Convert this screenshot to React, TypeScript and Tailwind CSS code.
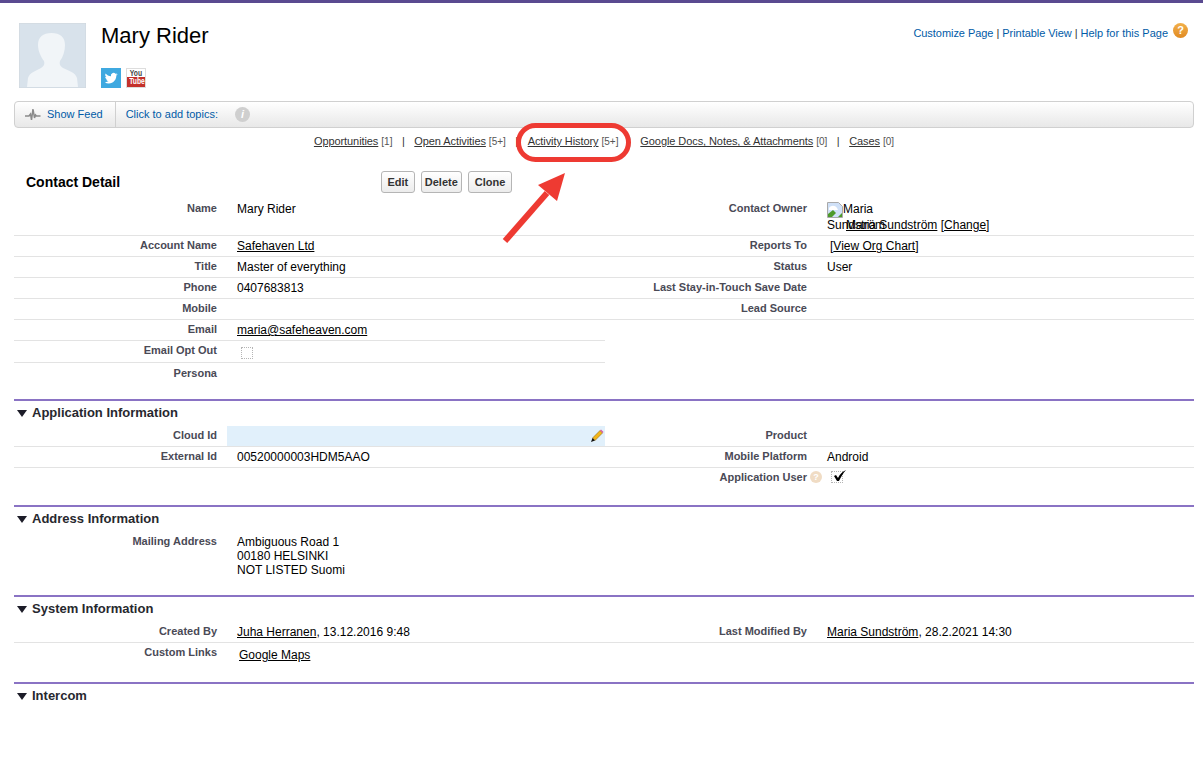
import type { ReactNode } from "react"

const Label = ({ children, className = "w-[213px] pt-[2px]" }: { children?: ReactNode; className?: string }) => (
  <div className={`shrink-0 pr-[10px] text-right text-[11px] leading-[14px] font-bold text-[#4a4a56] ${className}`}>
    {children}
  </div>
)

const Value = ({ children, className = "" }: { children?: ReactNode; className?: string }) => (
  <div className={`pl-[10px] pt-[3px] text-[12px] leading-[14px] text-black ${className}`}>{children}</div>
)

// full width detail row, h includes the bottom border
const Row = ({ cells, h = "h-[21px]", line = true }: { cells: ReactNode; h?: string; line?: boolean }) => (
  <div className={`flex ${h} ${line ? "border-b border-[#e3e3e3]" : ""}`}>{cells}</div>
)

const Pair = ({ a, b, c, d }: { a?: ReactNode; b?: ReactNode; c?: ReactNode; d?: ReactNode }) => (
  <>
    <Label>{a}</Label>
    <Value className="w-[377px] shrink-0">{b}</Value>
    <Label>{c}</Label>
    <Value className="flex-1">{d}</Value>
  </>
)

const Section = ({ title, children }: { title: string; children?: ReactNode }) => (
  <section className="border-t-2 border-[#8a73c4]">
    <div className="flex h-[25px] items-center gap-[5px] pb-[2px] pl-[3px] text-[13px] font-bold text-[#27282e]">
      <svg width="10" height="8" viewBox="0 0 10 8">
        <path d="M0 1h10L5 8z" fill="#1c1c28" />
      </svg>
      {title}
    </div>
    {children}
  </section>
)

const Tab = ({ name, count, sep = true }: { name: string; count: string; sep?: boolean }) => (
  <>
    <span className="text-[11px] tracking-[-0.08px] text-[#333] underline">{name}</span>
    <span className="ml-[3px] text-[10px] text-[#555]">[{count}]</span>
    {sep && <span className="mx-[9.5px] text-[11px] text-[#333]">|</span>}
  </>
)

const Btn = ({ children, className = "px-[6px]" }: { children: ReactNode; className?: string }) => (
  <button className={`h-[22px] rounded-[3px] border border-[#b5b5b5] bg-gradient-to-b from-white to-[#ececec] text-[11px] font-bold text-[#333] ${className}`}>
    {children}
  </button>
)

const Mail = ({ children }: { children: ReactNode }) => <span className="text-black underline">{children}</span>

export default function App() {
  return (
    <div className="relative min-h-[776px] overflow-hidden bg-white font-['Liberation_Sans',Arial,sans-serif]">
      <div className="h-[3px] bg-[#5a4a90]" />

      {/* Page header */}
      <header className="flex h-[98px] pl-[19px] pr-[15px] pt-[20px]">
        <svg width="67" height="65" viewBox="0 0 67 65" className="shrink-0">
          <rect width="67" height="65" fill="#d8e2eb" stroke="#cfd6dc" />
          <path
            d="M32.500 10C41 10 46 14 46 22C46 28 44 34 41 38C40 41 41 43 44 45C50 48 56 49 58 55L59 64H8L9 55C11 49 17 48 22 45C25 43 26 41 25 38C22 34 19 28 19 22C19 14 24 10 32.500 10Z"
            fill="#f1f5f8"
          />
        </svg>
        <div className="ml-[15px]">
          <h1 className="text-[22px] leading-[26px] font-normal text-black">Mary Rider</h1>
          <div className="mt-[19px] flex gap-[5px]">
            <svg width="20" height="20" viewBox="0 0 20 20">
              <rect width="20" height="20" fill="#3fa9e0" />
              <path
                d="M16.500 6.200c-.5.2-1 .4-1.500.4.5-.3 1-.8 1.200-1.400-.5.3-1.100.5-1.700.6a2.600 2.600 0 0 0-4.500 2.400c-2.200-.1-4.100-1.100-5.400-2.700-.7 1.200-.4 2.700.8 3.500-.4 0-.8-.1-1.200-.3 0 1.300.9 2.400 2.100 2.600-.4.1-.8.1-1.200 0 .3 1 1.300 1.800 2.500 1.800-1.100.9-2.500 1.300-3.900 1.100 1.200.8 2.600 1.200 4.100 1.200 4.900 0 7.700-4.100 7.500-7.900.5-.3 1-.8 1.400-1.300z"
                fill="#fff"
              />
            </svg>
            <div className="flex h-[20px] w-[20px] flex-col overflow-hidden border border-[#ddd] text-center text-[9px] leading-[9px] font-bold">
              <span className="h-[8px] scale-x-75 text-[#444]">You</span>
              <span className="flex-1 bg-[#c4302b] text-white">
                <span className="block scale-x-75">Tube</span>
              </span>
            </div>
          </div>
        </div>
        <div className="ml-auto flex h-[20px] items-center text-[11px] text-[#333]">
          <span className="tracking-[-0.05px] text-[#015ba7]">Customize Page</span>
          <span className="mx-[3px]">|</span>
          <span className="tracking-[-0.05px] text-[#015ba7]">Printable View</span>
          <span className="mx-[3px]">|</span>
          <span className="text-[#015ba7]">Help for this Page</span>
          <span className="mb-[5px] ml-[5px] flex h-[15px] w-[15px] items-center justify-center rounded-full bg-gradient-to-b from-[#f2b04a] to-[#e08a20] text-[11px] font-bold text-white">
            ?
          </span>
        </div>
      </header>

      <main className="ml-[14px] mr-[9px]">
        {/* Feed bar */}
        <div className="flex h-[27px] items-center rounded-[4px] border border-[#d0d0d0] bg-gradient-to-b from-white to-[#e8e8e8] text-[11px] text-[#015ba7]">
          <div className="flex h-full items-center border-r border-[#d0d0d0] pl-[10px] pr-[12px]">
            <svg width="16" height="14" viewBox="0 0 16 14" className="mr-[6px]">
              <path d="M0 8h4l1.500-2 1 6 1.500-11 1.500 9 1-3 1 1h4" fill="none" stroke="#8a8a8a" strokeWidth="1.500" />
            </svg>
            Show Feed
          </div>
          <span className="ml-[10px]">Click to add topics:</span>
          <span className="ml-[17px] flex h-[15px] w-[15px] items-center justify-center rounded-full bg-[#cfcfcf] text-[11px] font-bold text-white italic">
            i
          </span>
        </div>

        {/* Related list links */}
        <nav className="flex h-[27px] items-center justify-center">
          <Tab name="Opportunities" count="1" />
          <Tab name="Open Activities" count="5+" />
          <Tab name="Activity History" count="5+" />
          <Tab name="Google Docs, Notes, & Attachments" count="0" />
          <Tab name="Cases" count="0" sep={false} />
        </nav>

        {/* Detail title and buttons */}
        <div className="flex h-[44px] items-center pt-[10px]">
          <h2 className="ml-[12px] w-[355px] text-[14px] font-bold text-black">Contact Detail</h2>
          <div className="flex gap-[6px]">
            <Btn className="px-[5.5px]">Edit</Btn>
            <Btn className="px-[3px]">Delete</Btn>
            <Btn>Clone</Btn>
          </div>
        </div>

        <Row
          h="h-[37px]"
          cells={
            <Pair
              a="Name"
              b="Mary Rider"
              c="Contact Owner"
              d={
                <div className="relative">
                  <svg width="16" height="16" viewBox="0 0 16 16" className="absolute top-0 left-0">
                    <path d="M.5.5h11l4 4v11H.5z" fill="#cfe0f7" stroke="#a9a9a9" />
                    <path d="M1 15v-3l5-4 3 3-4 4z" fill="#4c9a2a" />
                    <path d="M2 6c2-3 6-3 8 0l1 2H2z" fill="#fff" />
                    <path d="M11 15l4-4v4z" fill="#4c9a2a" />
                  </svg>
                  <span className="absolute top-0 left-[16px]">Maria</span>
                  <span className="absolute top-[16px] left-0">Sundström</span>
                  <span className="absolute top-[16px] left-[19px] whitespace-nowrap">
                    <Mail>Maria Sundström</Mail> [<Mail>Change</Mail>]
                  </span>
                </div>
              }
            />
          }
        />
        <Row cells={<Pair a="Account Name" b={<Mail>Safehaven Ltd</Mail>} c="Reports To" d={<span className="ml-[3px]">[<Mail>View Org Chart</Mail>]</span>} />} />
        <Row cells={<Pair a="Title" b="Master of everything" c="Status" d="User" />} />
        <Row cells={<Pair a="Phone" b="0407683813" c="Last Stay-in-Touch Save Date" />} />
        <Row cells={<Pair a="Mobile" c="Lead Source" />} />
        <div className="w-[591px]">
          <Row cells={<><Label>Email</Label><Value><Mail>maria@safeheaven.com</Mail></Value></>} />
          <Row
            h="h-[22px]"
            cells={
              <>
                <Label>Email Opt Out</Label>
                <Value>
                  <div className="ml-[4px] mt-[3px] h-[12px] w-[12px] border border-dotted border-[#b5b5b5]" />
                </Value>
              </>
            }
          />
          <div className="h-[36px]">
            <Row line={false} cells={<Label className="w-[213px] pt-[3px]">Persona</Label>} />
          </div>
        </div>

        <Section title="Application Information">
          <Row
            cells={
              <>
                <Label>Cloud Id</Label>
                <div className="flex w-[378px] shrink-0 justify-end bg-[#e1f0fb] pr-[1px] pt-[3px]">
                  <svg width="13" height="13" viewBox="0 0 13 13">
                    <path d="M1.500 9l7.500-7.500 2.500 2.500L4 11.500z" fill="#f3b619" stroke="#7a5a10" strokeWidth=".5" />
                    <path d="M9 1.500l1-1 2.500 2.500-1 1z" fill="#d85ca0" />
                    <path d="M0 13l1.500-4 2.500 2.500z" fill="#111" />
                  </svg>
                </div>
                <Label className="w-[212px] pt-[2px]">Product</Label>
                <Value />
              </>
            }
          />
          <Row cells={<Pair a="External Id" b="00520000003HDM5AAO" c="Mobile Platform" d="Android" />} />
          <Row
            h="h-[37px]"
            line={false}
            cells={
              <>
                <Label />
                <Value className="w-[377px] shrink-0" />
                <Label>
                  <div className="flex justify-end">
                    Application User
                    <span className="-mr-[15px] ml-[3px] mt-[1px] flex h-[12px] w-[12px] items-center justify-center rounded-full bg-[#f0dcc4] text-[9px] text-white">
                      ?
                    </span>
                  </div>
                </Label>
                <Value className="flex-1">
                  <div className="relative ml-[4px] h-[12px] w-[12px] border border-dotted border-[#b5b5b5]">
                    <svg width="14" height="13" viewBox="0 0 14 13" className="absolute -top-[3px] left-[1px]">
                      <path d="M1 7l2-1 2 3c2-4 4-6 8-8-3 3-5 7-7 11H4z" fill="#000" />
                    </svg>
                  </div>
                </Value>
              </>
            }
          />
        </Section>

        <Section title="Address Information">
          <Row
            h="h-[63px]"
            line={false}
            cells={
              <>
                <Label>Mailing Address</Label>
                <Value>
                  Ambiguous Road 1
                  <br />
                  00180 HELSINKI
                  <br />
                  NOT LISTED Suomi
                </Value>
              </>
            }
          />
        </Section>

        <Section title="System Information">
          <Row
            cells={
              <Pair
                a="Created By"
                b={<><Mail>Juha Herranen</Mail>, 13.12.2016 9:48</>}
                c="Last Modified By"
                d={<><Mail>Maria Sundström</Mail>, 28.2.2021 14:30</>}
              />
            }
          />
          <div className="w-[591px]">
            <Row
              h="h-[39px]"
              line={false}
              cells={
                <>
                  <Label>Custom Links</Label>
                  <Value className="pt-[5px] pl-[12px]"><Mail>Google Maps</Mail></Value>
                </>
              }
            />
          </div>
        </Section>

        <Section title="Intercom" />
      </main>

      {/* Red annotation */}
      <div className="absolute top-[123px] left-[516px] h-[39px] w-[115px] rounded-full border-[5px] border-[#ee3a32]" />
      <svg width="80" height="84" viewBox="0 0 80 84" className="absolute top-[166px] left-[497px]">
        <path d="M8 75L50 27" stroke="#ee3a32" strokeWidth="6" fill="none" />
        <path d="M68 7L41 19 60 35z" fill="#ee3a32" />
      </svg>
    </div>
  )
}
